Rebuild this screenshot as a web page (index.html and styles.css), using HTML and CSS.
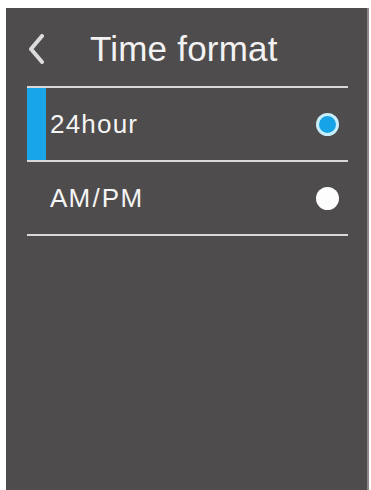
FILE: index.html
```html
<!DOCTYPE html>
<html>
<head>
<meta charset="utf-8">
<link rel="stylesheet" href="styles.css">
</head>
<body>
<div class="screen">
  <div class="header">
    <svg class="back" width="18" height="30" viewBox="0 0 18 30"><path d="M15 2 L4 15 L15 28" fill="none" stroke="#dcdcdc" stroke-width="4" stroke-linecap="round" stroke-linejoin="round"/></svg>
    <div class="title">Time format</div>
  </div>
  <div class="list">
    <div class="row selected">
      <div class="bar"></div>
      <div class="label">24hour</div>
      <div class="dot blue"></div>
    </div>
    <div class="row">
      <div class="label">AM<span class="slash">/</span>PM</div>
      <div class="dot white"></div>
    </div>
  </div>
</div>
</body>
</html>
```
FILE: styles.css
```css
html, body {
  margin: 0;
  padding: 0;
  background: #ffffff;
}
body {
  padding: 8px 2px 0 6px;
  font-family: "Liberation Sans", Arial, sans-serif;
}
.screen {
  height: 482px;
  background: #4e4c4c;
  border-right: 2px solid #8a8888;
  box-sizing: border-box;
}
.header {
  height: 78px;
  display: flex;
  align-items: center;
  padding-left: 21px;
  padding-top: 3px;
  box-sizing: border-box;
}
.back {
  display: block;
}
.title {
  margin-left: 45px;
  color: #f2f2f2;
  font-size: 35px;
  letter-spacing: 0.2px;
  line-height: 1;
}
.list {
  margin: 0 19px 0 21px;
  border-top: 2px solid #d8d8d8;
}
.row {
  height: 72px;
  display: flex;
  align-items: center;
  border-bottom: 2px solid #d8d8d8;
  padding-left: 23px;
  padding-right: 9px;
}
.row.selected {
  padding-left: 0;
}
.bar {
  width: 19px;
  align-self: stretch;
  background: #18a6e8;
  margin-right: 4px;
}
.label {
  flex: 1;
  color: #f4f4f4;
  font-size: 26px;
  letter-spacing: 1.2px;
}
.slash {
  margin: 0 1px;
}
.dot {
  width: 23px;
  height: 23px;
  border-radius: 50%;
  box-sizing: border-box;
}
.dot.blue {
  background: #17a4e6;
  border: 3px solid #c8eefc;
}
.dot.white {
  background: #fdfdfd;
}
```
